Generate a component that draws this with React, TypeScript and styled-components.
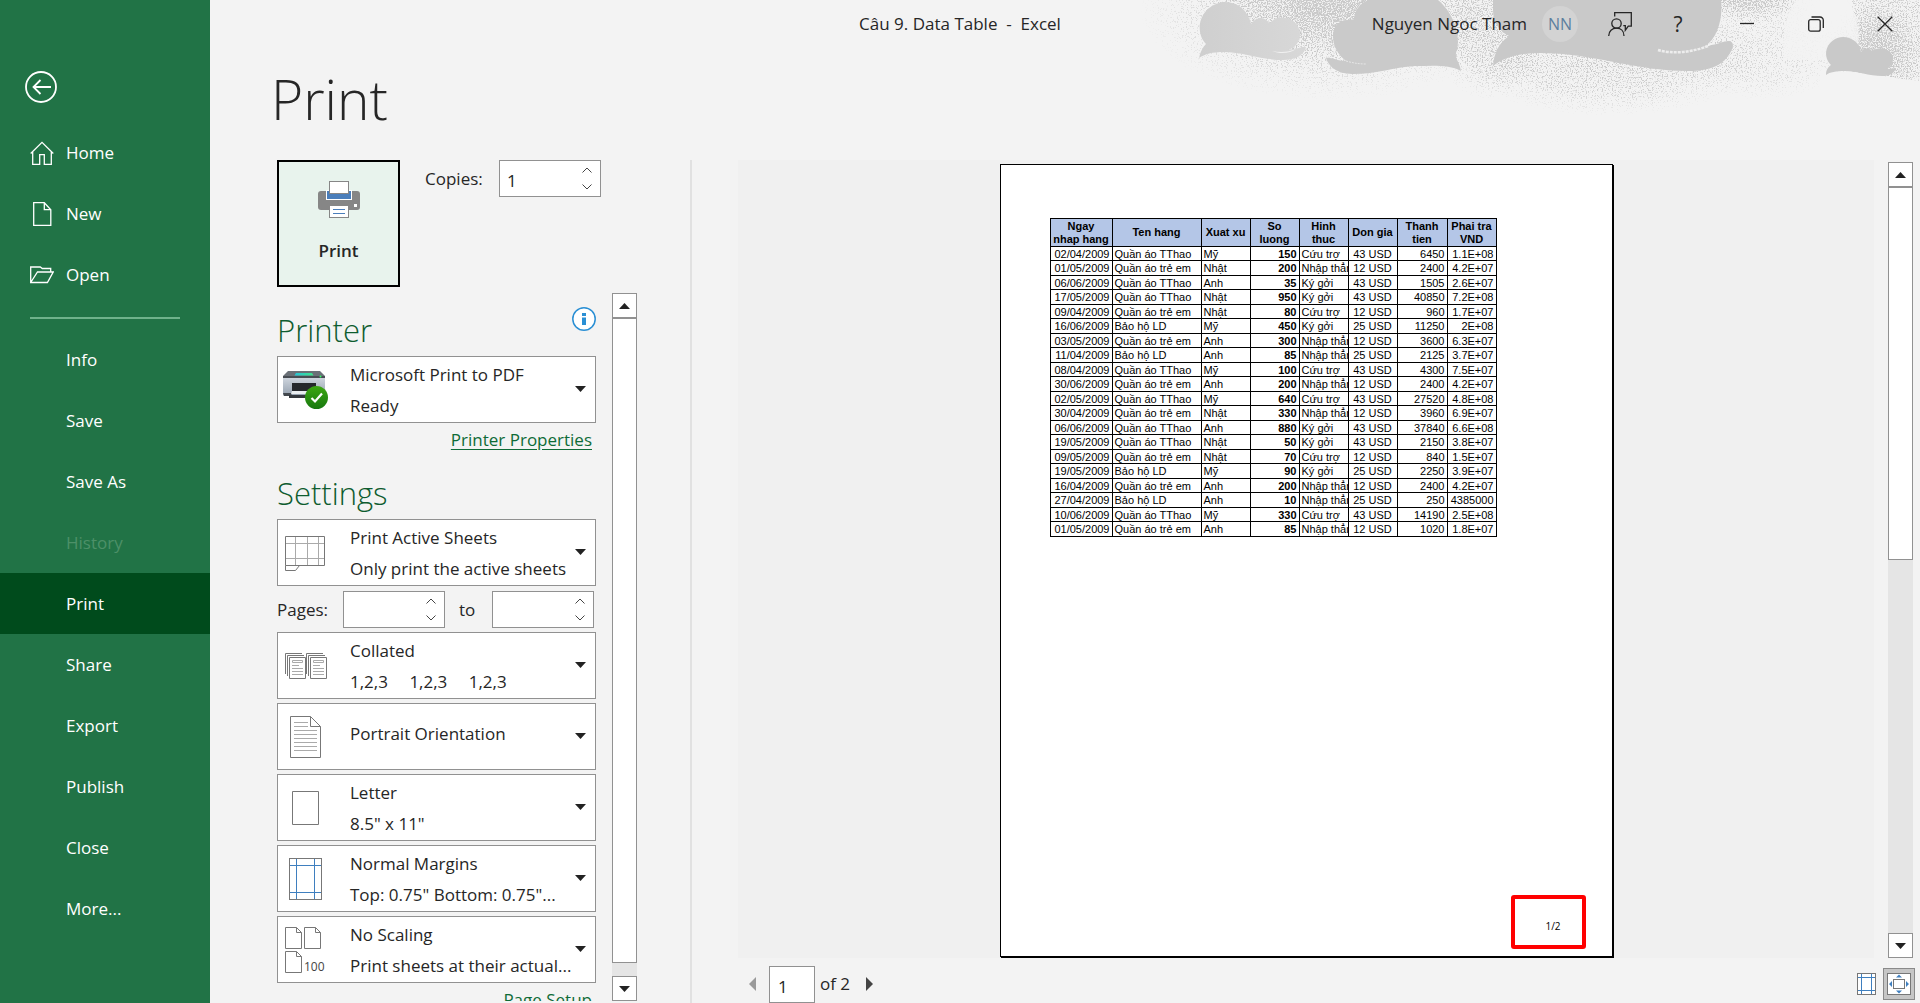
import React from "react";
import styled, { createGlobalStyle } from "styled-components";

const ui = `"Segoe UI", "Open Sans", "Noto Sans", sans-serif`;
const ink = "#262626";
const line = "#919191";

const GlobalStyle = createGlobalStyle`
  *, *::before, *::after { box-sizing: border-box; }
  body { margin: 0; background: #f3f3f3; color: ${ink}; font: 17px/24px ${ui}; }
  button, input, select { font: inherit; color: inherit; margin: 0; }
  button { background: none; border: 0; padding: 0; cursor: pointer; }
  svg { display: block; flex: none; }
`;

const Shell = styled.div`
  display: grid;
  grid-template-columns: 210px minmax(0, 1fr);
  height: 100vh;
  min-height: 640px;
  overflow: hidden;
`;

/* ---------- Sidebar ---------- */
const Sidebar = styled.nav`
  background: #217346;
  color: #fff;
  display: flex;
  flex-direction: column;
`;
const BackButton = styled.button`
  align-self: flex-start;
  margin: 71px 0 19px 25px;
`;
const NavItem = styled.button<{ $active?: boolean }>`
  display: flex;
  align-items: center;
  gap: 12px;
  flex: none;
  height: 61px;
  padding-left: 30px;
  text-align: left;
  color: #fff;
  background: ${(p) => (p.$active ? "#004b1c" : "transparent")};
  &:disabled { color: #4d9068; }
`;
const IconSlot = styled.span`
  width: 24px;
  height: 24px;
  display: grid;
  place-items: center;
`;
const NavRule = styled.hr`
  width: 150px;
  height: 2px;
  margin: 12px 0 10px 30px;
  border: 0;
  background: #6fb28b;
`;

/* ---------- Title bar ---------- */
const Main = styled.main`
  position: relative;
  display: flex;
  flex-direction: column;
  min-width: 0;
  min-height: 0;
`;
const Sky = styled.svg`
  position: absolute;
  top: 0;
  right: 0;
  pointer-events: none;
`;
const TitleBar = styled.header`
  position: relative;
  display: flex;
  align-items: center;
  justify-content: flex-end;
  height: 48px;
`;
const DocTitle = styled.div`
  position: absolute;
  left: calc(50% - 105px);
  transform: translateX(-50%);
  font-size: 17px;
  white-space: pre;
`;
const UserName = styled.span`
  margin-right: 15px;
`;
const Avatar = styled.span`
  width: 36px;
  height: 36px;
  border-radius: 50%;
  background: #d3d3d3;
  color: #5d7f9f;
  display: grid;
  place-items: center;
  font-size: 16px;
  margin-right: 16px;
`;
const BarButton = styled.button<{ $w: number }>`
  width: ${(p) => p.$w}px;
  height: 48px;
  display: grid;
  place-items: center;
  font-size: 21px;
`;

/* ---------- Body ---------- */
const PageTitle = styled.h1`
  position: relative;
  margin: 0 0 0 61px;
  height: 112px;
  font-size: 55px;
  line-height: 102px;
  font-weight: 300;
`;
const Columns = styled.div`
  flex: 1;
  min-height: 0;
  display: grid;
  grid-template-columns: 480px 2px minmax(0, 1fr);
`;
const Divider = styled.div`
  background: #e1e1e1;
`;
const Options = styled.section`
  display: flex;
  flex-direction: column;
  min-height: 0;
  padding-left: 67px;
`;
const PrintRow = styled.div`
  display: flex;
  align-items: flex-start;
`;
const PrintButton = styled.button`
  width: 123px;
  height: 127px;
  border: 2px solid #000;
  background: #e8f3ed;
  display: flex;
  flex-direction: column;
  align-items: center;
  padding-top: 19px;
  gap: 21px;
  font-weight: 600;
`;
const FieldLabel = styled.label<{ $w: number; $pad?: number }>`
  width: ${(p) => p.$w}px;
  padding-left: ${(p) => p.$pad ?? 0}px;
  line-height: 37px;
`;
const SpinBox = styled.span`
  display: flex;
  width: 102px;
  height: 37px;
  background: #fff;
  border: 1px solid ${line};
`;
const SpinInput = styled.input`
  flex: 1;
  min-width: 0;
  padding: 4px 0 0 7px;
  border: 0;
  background: none;
  outline: 0;
`;
const SpinButtons = styled.span`
  display: flex;
  flex-direction: column;
  width: 26px;
`;
const SpinButton = styled.button`
  flex: 1;
  display: grid;
  place-items: center;
`;
const ScrollArea = styled.div`
  flex: 1;
  min-height: 0;
  margin-top: 6px;
  padding-bottom: 2px;
  display: flex;
  gap: 16px;
`;
const Settings = styled.div`
  width: 319px;
  overflow: hidden;
  display: flex;
  flex-direction: column;
`;
const SectionHead = styled.div<{ $top: number }>`
  flex: none;
  display: flex;
  justify-content: space-between;
  align-items: flex-start;
  margin: ${(p) => p.$top}px 0 3px;
`;
const SectionTitle = styled.h2`
  margin: 0;
  font-size: 31px;
  line-height: 46px;
  font-weight: 300;
  color: #0e5c2f;
`;
const Card = styled.label`
  flex: none;
  display: grid;
  grid-template-columns: 54px minmax(0, 1fr);
  align-items: center;
  column-gap: 18px;
  height: 67px;
  margin-bottom: 4px;
  border: 1px solid ${line};
  background: #fff;
  position: relative;
`;
const CardIcon = styled.span`
  display: grid;
  place-items: center;
`;
const CardText = styled.span<{ $single: boolean }>`
  display: flex;
  flex-direction: column;
  line-height: 31px;
  white-space: pre;
  padding-bottom: ${(p) => (p.$single ? 6 : 0)}px;
`;
const CardSelect = styled.select`
  appearance: none;
  height: 31px;
  width: 210px;
  padding: 0;
  border: 0;
  background: none;
  outline: 0;
`;
const CardArrow = styled.span`
  position: absolute;
  right: 9px;
  top: 29px;
`;
const LinkRow = styled.div`
  flex: none;
  display: flex;
  justify-content: flex-end;
  padding: 1px 4px 0 0;
`;
const TextLink = styled.a`
  color: #0e6b37;
  text-underline-offset: 3px;
`;
const PagesRow = styled.div`
  flex: none;
  display: flex;
  margin: 1px 0 4px;
`;

/* ---------- Scrollbar ---------- */
const Scroll = styled.div<{ $top: number }>`
  width: 25px;
  margin-top: ${(p) => p.$top}px;
  display: flex;
  flex-direction: column;
  background: #e5e5e5;
`;
const ScrollButton = styled.button`
  flex: none;
  height: 25px;
  border: 1px solid ${line};
  background: #fff;
  display: grid;
  place-items: center;
`;
const Track = styled.div`
  flex: 1;
`;
const Thumb = styled.div<{ $share: number }>`
  height: ${(p) => p.$share}%;
  border: 1px solid ${line};
  background: #fff;
`;

/* ---------- Preview ---------- */
const Preview = styled.section`
  display: flex;
  flex-direction: column;
  min-width: 0;
  min-height: 0;
  padding-left: 46px;
`;
const PreviewRow = styled.div`
  flex: 1;
  min-height: 0;
  display: flex;
  gap: 14px;
  padding-right: 7px;
`;
const Stage = styled.div`
  flex: 1;
  min-width: 0;
  display: flex;
  justify-content: center;
  padding: 4px 0 1px;
  background: #f0f0f0;
`;
const Paper = styled.article`
  width: 613px;
  padding: 53px 49px 7px;
  display: flex;
  flex-direction: column;
  justify-content: space-between;
  background: #fff;
  border: 1px solid #000;
  box-shadow: 1px 1px 0 #000;
`;
const PageNumberFrame = styled.div`
  align-self: flex-end;
  width: 75px;
  height: 54px;
  margin-right: -23px;
  padding: 7px 0 0 10px;
  border: 4px solid #f00;
  border-radius: 3px;
  display: grid;
  place-items: center;
  color: #000;
  font-size: 10px;
`;
const Sheet = styled.table`
  width: 447px;
  table-layout: fixed;
  border-collapse: collapse;
  color: #000;
  font: 11px/12px "Liberation Sans", Arial, sans-serif;
  th, td { border: 1px solid #000; padding: 0 2px; white-space: nowrap; overflow: hidden; }
  th { height: 28px; padding: 0; line-height: 13px; background: #b4c6e7; white-space: pre-line; }
  tbody tr { height: 15px; }
  tbody tr:nth-child(odd) { height: 14px; }
`;
const Cell = styled.td<{ $align?: string; $bold?: boolean }>`
  text-align: ${(p) => p.$align ?? "left"};
  font-weight: ${(p) => (p.$bold ? 700 : 400)};
`;
const Footer = styled.footer`
  display: flex;
  align-items: center;
  height: 45px;
  padding: 6px 5px 0 11px;
`;
const PageInput = styled.input`
  width: 46px;
  height: 37px;
  margin: 1px 5px 0 13px;
  padding: 4px 0 0 8px;
  border: 1px solid ${line};
  background: #fff;
`;
const PageCount = styled.span`
  margin-right: 16px;
`;
const Spacer = styled.span`
  flex: 1;
`;
const ZoomButton = styled.button`
  width: 32px;
  height: 32px;
  margin-left: 7px;
  border: 1px solid #8a8a8a;
  background: #c6c6c6;
  display: grid;
  place-items: center;
`;

/* ---------- Icons ---------- */
const BackIcon = () => (
  <svg width="32" height="32" fill="none" stroke="#fff" strokeWidth="1.8">
    <circle cx="16" cy="16" r="15" />
    <path d="M26 16H8.5M15.500 9L8.500 16l7 7" />
  </svg>
);
const HomeIcon = () => (
  <svg width="24" height="24" fill="none" stroke="#fff" strokeWidth="1.3">
    <path d="M.7 12.500L12 1.300l11.300 11.200M2.700 11v12.300h7V13.700h4.600v9.600h7V11" />
  </svg>
);
const NewIcon = () => (
  <svg width="24" height="24" fill="none" stroke="#fff" strokeWidth="1.3">
    <path d="M3.700.700h10.600l6.500 7v15.600H3.700zM14.300.700v7h6.500" />
  </svg>
);
const OpenIcon = () => (
  <svg width="24" height="24" fill="none" stroke="#fff" strokeWidth="1.3">
    <path d="M.700 19.500V4h9.600l2 1.500h8.400v3.500M.700 19.500L7.500 9h15.700l-5.800 10.500z" />
  </svg>
);
const FeedbackIcon = () => (
  <svg width="24" height="24" fill="none" stroke={ink} strokeWidth="1.3">
    <path d="M6.700 4.500V.700h16.600v13.500h-3l-3 4v-4.500h-2" />
    <circle cx="8.500" cy="11.500" r="4.700" />
    <path d="M.700 24c0-5 3.500-7.800 7.800-7.800s7.500 2.800 7.500 7.800" />
  </svg>
);
const MinIcon = () => (
  <svg width="16" height="16" stroke={ink} strokeWidth="1.300"><path d="M1 7.500h14" /></svg>
);
const RestoreIcon = () => (
  <svg width="16" height="16" fill="none" stroke={ink} strokeWidth="1.300">
    <rect x=".700" y="3.700" width="11.500" height="11.500" rx="2" />
    <path d="M3.500 1h8.500a3.300 3.300 0 0 1 3.300 3.300V12" />
  </svg>
);
const CloseIcon = () => (
  <svg width="16" height="16" stroke={ink} strokeWidth="1.300"><path d="M.700.700l14.600 14.600M15.300.700L.700 15.300" /></svg>
);
const PrinterIcon = () => (
  <svg width="42" height="37">
    <rect y="10" width="42" height="19" rx="3" fill="#868686" />
    <rect x="8" y="9" width="26" height="10" fill="#fff" />
    <rect x="9" y="10" width="24" height="8" fill="#4a7ebb" />
    <rect x="11.500" y=".500" width="19" height="12" fill="#fff" stroke="#868686" />
    <rect x="11.500" y="24.500" width="19" height="12" fill="#fff" stroke="#868686" />
    <path d="M15 28.500h12M15 32.500h12" stroke="#4a7ebb" />
    <rect x="36" y="23" width="3" height="3" fill="#fff" />
  </svg>
);
const DeviceIcon = () => (
  <svg width="45" height="39">
    <defs>
      <linearGradient id="body" x1="0" y1="0" x2="0" y2="1"><stop stopColor="#d4dae2" /><stop offset="1" stopColor="#939fad" /></linearGradient>
      <linearGradient id="glass"><stop stopColor="#27c3d8" /><stop offset="1" stopColor="#3de58a" /></linearGradient>
      <linearGradient id="tick" x1="0" y1="0" x2="0" y2="1"><stop stopColor="#3da712" /><stop offset="1" stopColor="#17780f" /></linearGradient>
    </defs>
    <path d="M0 6h42v18q0 2-2 2H2q-2 0-2-2z" fill="url(#body)" />
    <path d="M5 1h32l5 5v2H0V6z" fill="#6a7077" />
    <path d="M0 6h42v2H0z" fill="#484d53" />
    <path d="M13 3h16l1.500 2.500h-19z" fill="url(#glass)" />
    <path d="M9 13h24v8H9z" fill="#25282c" />
    <path d="M0 23h10l-3 3H1z" fill="#43484e" />
    <path d="M9 21h24v3H8z" fill="#e9edf0" />
    <path d="M6 25h26v3H6z" fill="#34383d" />
    <circle cx="37.500" cy="6.500" r="1" fill="#3f6" />
    <circle cx="33.500" cy="27.500" r="11.500" fill="url(#tick)" />
    <path d="M28.500 28l3.500 3.500 7-8" fill="none" stroke="#fff" strokeWidth="2.200" />
  </svg>
);
const SheetIcon = () => (
  <svg width="42" height="36" fill="none" stroke="#777">
    <path d="M1 8.500h40M1 23.500h40M11.500 1v29M23.500 1v29M34.500 1v29" stroke="#aaa" />
    <path d="M1.500 1.500h39v29h-39zM1.500 30.500v5h10l4-5" />
  </svg>
);
const CollatedIcon = () => (
  <svg width="43" height="27" fill="none" stroke="#777">
    {[0, 21].map((x) => (
      <g key={x} transform={`translate(${x})`}>
        <path d="M1.500 22V1.500H18M3.500 24V3.500H20M5.500 5.500h16v21h-16z" />
        <path d="M8.500 8.500h10v2h-10zM8 13.500h7M8 16.500h11M8 19.500h11M8 22.500h11" stroke="#aaa" />
      </g>
    ))}
  </svg>
);
const PortraitIcon = () => (
  <svg width="31" height="42" fill="none" stroke="#777">
    <path d="M.500.500h20l10 10v31H.500zM20.500.500v10h10" />
    <path d="M4 6.500h14M4 10.500h14M4 14.500h23M4 18.500h23M4 22.500h23M4 26.500h23M4 30.500h23M4 34.500h23" stroke="#aaa" />
  </svg>
);
const LetterIcon = () => (
  <svg width="27" height="34" fill="none" stroke="#777"><path d="M.500.500h26v33H.500z" /></svg>
);
const MarginsIcon = ({ w, h, m }: { w: number; h: number; m: number }) => (
  <svg width={w} height={h} fill="none" stroke="#777">
    <rect x=".500" y=".500" width={w - 1} height={h - 1} fill="#fff" />
    <path
      stroke="#3f7fbf"
      d={`M${m + 0.5} 1V${h - 1}M${w - m - 0.5} 1V${h - 1}M1 ${m + 0.5}H${w - 1}M1 ${h - m - 0.5}H${w - 1}`}
    />
  </svg>
);
const ScalingIcon = () => (
  <svg width="40" height="46" fill="none" stroke="#777">
    {["translate(0)", "translate(19)", "translate(0 24)"].map((t) => (
      <path key={t} transform={t} d="M.500.500h11l5 5v16H.500zM11.500.500v5h5" />
    ))}
    <text x="19" y="44" fontSize="12" fill="#444" stroke="none">100</text>
  </svg>
);
const InfoIcon = () => (
  <svg width="24" height="24">
    <circle cx="12" cy="12" r="11.200" fill="#fff" stroke="#2a8fd4" strokeWidth="1.500" />
    <path d="M10 6h4v3h-4zM10 10.500h4V18h-4z" fill="#2a8fd4" />
  </svg>
);
const Chevron = ({ up }: { up?: boolean }) => (
  <svg width="10" height="6" fill="none" stroke="#444">
    <path d={up ? "M.500 5.500l4.500-4.500 4.500 4.500" : "M.500.500l4.500 4.500 4.500-4.500"} />
  </svg>
);
const Caret = ({ up }: { up?: boolean }) => (
  <svg width="11" height="6"><path d={up ? "M0 6h11L5.500 0z" : "M0 0h11L5.500 6z"} fill="#222" /></svg>
);
const SideCaret = ({ left }: { left?: boolean }) => (
  <svg width="7" height="14"><path d={left ? "M7 0v14L0 7z" : "M0 0v14l7-7z"} fill={left ? "#9a9a9a" : "#444"} /></svg>
);
const FitIcon = () => (
  <svg width="24" height="22">
    <rect x=".500" y=".500" width="23" height="21" fill="#fff" stroke="#777" />
    <rect x="6.500" y="6.500" width="11" height="9" fill="none" stroke="#777" />
    <path d="M12 1.500l3 3H9zM12 20.500l3-3H9zM2 11l3-3v6zM22 11l-3-3v6z" fill="#3f7fbf" />
  </svg>
);

const SkyArt = () => (
  <Sky width="780" height="120" aria-hidden="true">
    <defs>
      <filter id="grain" x="0" y="0" width="100%" height="100%" colorInterpolationFilters="sRGB">
        <feTurbulence type="fractalNoise" baseFrequency="0.8" numOctaves="2" seed="4" />
        <feColorMatrix values="0 0 0 0 0  0 0 0 0 0  0 0 0 0 0  3 0 0 0 -1" result="n" />
        <feComposite in="SourceGraphic" in2="n" operator="arithmetic" k2="1" k3="1" k4="-1" />
        <feComponentTransfer result="m"><feFuncA type="linear" slope="2" /></feComponentTransfer>
        <feFlood floodColor="#c9c9c9" />
        <feComposite operator="in" in2="m" />
      </filter>
      <radialGradient id="puff"><stop offset=".2" stopOpacity=".8" /><stop offset="1" stopOpacity="0" /></radialGradient>
      <radialGradient id="haze"><stop stopOpacity=".55" /><stop offset=".6" stopOpacity=".4" /><stop offset="1" stopOpacity="0" /></radialGradient>
      <linearGradient id="fade" x1="0" y1="0" x2="1" y2="0"><stop stopColor="#cfcfcf" /><stop offset="1" stopColor="#d8d8d8" /></linearGradient>
    </defs>
    <g filter="url(#grain)">
      <rect width="780" height="120" fill="none" />
      <ellipse cx="190" cy="10" rx="190" ry="90" fill="url(#haze)" />
      <ellipse cx="190" cy="0" rx="120" ry="62" fill="url(#puff)" />
      <ellipse cx="350" cy="30" rx="60" ry="70" fill="url(#haze)" />
      <ellipse cx="470" cy="60" rx="150" ry="56" fill="url(#haze)" />
      <ellipse cx="610" cy="0" rx="70" ry="24" fill="url(#puff)" />
      <ellipse cx="620" cy="50" rx="90" ry="50" fill="url(#haze)" opacity=".7" />
      <path d="M712 0h68v82l-44-5-20-15z" fillOpacity=".45" />
      <ellipse cx="735" cy="50" rx="50" ry="50" fill="url(#puff)" />
    </g>
    <path d="M644 60C640 30 650 0 663-6h38c15 12 22 36 15 66z" fill="#f2f2f2" fillOpacity=".85" />
    <path d="M680 73C710 68 745 78 780 81v39H680z" fill="#f3f3f3" />
    <path d="M59 58c1-6 4-11 7-14-12-12-7-38 17-42 14-1 25 8 28 22 5-8 15-8 18 0 10-13 31-5 31 10 0 8-5 14-12 16 8-1 12-3 18-3-2 9-12 13-23 13-22 0-40-8-59-8-12 0-19 2-25 6z" fill="url(#fade)" />
    <path d="M132 51c9 2 17 1 24-2-6 5-17 5-24 2z" fill="#f0f0f0" />
    <path d="M186 58c5-1 11 3 20 3-8-6-13-15-13-25 0-10 6-16 15-16h6c0-8 5-16 14-20h70c16 13 24 38 18 53-1 6 4 10 5 18-12-7-30-5-47-5-20 1-36 8-62 8-16 0-24-9-26-16z" fill="#cacaca" />
    <path d="M206 61c7 2 13 3 20 3" fill="none" stroke="#e6e6e6" strokeDasharray="2 1" />
    <path d="M353 0h228c2 18-3 38-17 47 10-2 18-5 24-6 5 0 6 4 4 8-6 15-20 22-44 22-54 0-94-18-148-18-18 0-35 3-47 13 1-14 7-24 16-30-10-5-16-14-16-26z" fill="#c9c9c9" />
    <path d="M518 50c14 4 32 3 50-4" fill="none" stroke="#ededed" strokeWidth="2.500" strokeDasharray="3 1" />
    <path d="M686 75c0-5 2-8 5-10-10-10-4-27 12-28 10 0 17 7 18 15 3-5 8-4 11-1 8-6 21-2 21 8 0 5-3 8-6 10 4 0 6-1 9-1-2 6-7 8-13 8-15 0-25-5-38-5-9 0-15 1-19 4z" fill="#c9c9c9" />
  </Sky>
);

/* ---------- Data ---------- */
const headers = ["Ngay\nnhap hang", "Ten hang", "Xuat xu", "So\nluong", "Hinh\nthuc", "Don gia", "Thanh\ntien", "Phai tra\nVND"];
const widths = [62, 89, 49, 49, 49, 49, 50, 49];
const A = "Quần áo TThao";
const B = "Quần áo trẻ em";
const C = "Bảo hộ LD";
const U = "Cứu trợ";
const N = "Nhập thẳng";
const K = "Ký gởi";
const rows: string[][] = [
  ["02/04/2009", A, "Mỹ", "150", U, "43 USD", "6450", "1.1E+08"],
  ["01/05/2009", B, "Nhật", "200", N, "12 USD", "2400", "4.2E+07"],
  ["06/06/2009", A, "Anh", "35", K, "43 USD", "1505", "2.6E+07"],
  ["17/05/2009", A, "Nhật", "950", K, "43 USD", "40850", "7.2E+08"],
  ["09/04/2009", B, "Nhật", "80", U, "12 USD", "960", "1.7E+07"],
  ["16/06/2009", C, "Mỹ", "450", K, "25 USD", "11250", "2E+08"],
  ["03/05/2009", B, "Anh", "300", N, "12 USD", "3600", "6.3E+07"],
  ["11/04/2009", C, "Anh", "85", N, "25 USD", "2125", "3.7E+07"],
  ["08/04/2009", A, "Mỹ", "100", U, "43 USD", "4300", "7.5E+07"],
  ["30/06/2009", B, "Anh", "200", N, "12 USD", "2400", "4.2E+07"],
  ["02/05/2009", A, "Mỹ", "640", U, "43 USD", "27520", "4.8E+08"],
  ["30/04/2009", B, "Nhật", "330", N, "12 USD", "3960", "6.9E+07"],
  ["06/06/2009", A, "Anh", "880", K, "43 USD", "37840", "6.6E+08"],
  ["19/05/2009", A, "Nhật", "50", K, "43 USD", "2150", "3.8E+07"],
  ["09/05/2009", B, "Nhật", "70", U, "12 USD", "840", "1.5E+07"],
  ["19/05/2009", C, "Mỹ", "90", K, "25 USD", "2250", "3.9E+07"],
  ["16/04/2009", B, "Anh", "200", N, "12 USD", "2400", "4.2E+07"],
  ["27/04/2009", C, "Anh", "10", N, "25 USD", "250", "4385000"],
  ["10/06/2009", A, "Mỹ", "330", U, "43 USD", "14190", "2.5E+08"],
  ["01/05/2009", B, "Anh", "85", N, "12 USD", "1020", "1.8E+07"],
];
const aligns = ["right", "left", "left", "right", "left", "center", "right", "right"];

const topNav = [
  { label: "Home", icon: <HomeIcon /> },
  { label: "New", icon: <NewIcon /> },
  { label: "Open", icon: <OpenIcon /> },
];
const restNav = ["Info", "Save", "Save As", "History", "Print", "Share", "Export", "Publish", "Close", "More..."];

/* ---------- Composite parts ---------- */
function Spinner({ id, value }: { id: string; value: string }) {
  return (
    <SpinBox>
      <SpinInput id={id} inputMode="numeric" defaultValue={value} />
      <SpinButtons>
        <SpinButton aria-label="Increase"><Chevron up /></SpinButton>
        <SpinButton aria-label="Decrease"><Chevron /></SpinButton>
      </SpinButtons>
    </SpinBox>
  );
}

function OptionCard({ icon, title, detail }: { icon: React.ReactNode; title: string; detail?: string }) {
  return (
    <Card>
      <CardIcon>{icon}</CardIcon>
      <CardText $single={!detail}>
        <CardSelect defaultValue={title}><option>{title}</option></CardSelect>
        {detail && <span>{detail}</span>}
      </CardText>
      <CardArrow><Caret /></CardArrow>
    </Card>
  );
}

function ScrollBar({ share, top = 0 }: { share: number; top?: number }) {
  return (
    <Scroll $top={top}>
      <ScrollButton aria-label="Scroll up"><Caret up /></ScrollButton>
      <Track><Thumb $share={share} /></Track>
      <ScrollButton aria-label="Scroll down"><Caret /></ScrollButton>
    </Scroll>
  );
}

export default function App() {
  return (
    <Shell>
      <GlobalStyle />
      <Sidebar>
        <BackButton aria-label="Back"><BackIcon /></BackButton>
        {topNav.map((n) => (
          <NavItem key={n.label}><IconSlot>{n.icon}</IconSlot>{n.label}</NavItem>
        ))}
        <NavRule />
        {restNav.map((label) => (
          <NavItem key={label} $active={label === "Print"} disabled={label === "History"}>
            <IconSlot />{label}
          </NavItem>
        ))}
      </Sidebar>
      <Main>
        <SkyArt />
        <TitleBar>
          <DocTitle>Câu 9. Data Table  -  Excel</DocTitle>
          <UserName>Nguyen Ngoc Tham</UserName>
          <Avatar>NN</Avatar>
          <BarButton $w={52} aria-label="Feedback"><FeedbackIcon /></BarButton>
          <BarButton $w={64}>?</BarButton>
          <BarButton $w={73} aria-label="Minimize"><MinIcon /></BarButton>
          <BarButton $w={66} aria-label="Restore"><RestoreIcon /></BarButton>
          <BarButton $w={71} aria-label="Close window"><CloseIcon /></BarButton>
        </TitleBar>
        <PageTitle>Print</PageTitle>
        <Columns>
          <Options>
            <PrintRow>
              <PrintButton><PrinterIcon />Print</PrintButton>
              <FieldLabel htmlFor="copies" $w={99} $pad={25}>Copies:</FieldLabel>
              <Spinner id="copies" value="1" />
            </PrintRow>
            <ScrollArea>
              <Settings>
                <SectionHead $top={14}>
                  <SectionTitle>Printer</SectionTitle>
                  <InfoIcon />
                </SectionHead>
                <OptionCard icon={<DeviceIcon />} title="Microsoft Print to PDF" detail="Ready" />
                <LinkRow><TextLink href="#properties">Printer Properties</TextLink></LinkRow>
                <SectionHead $top={18}><SectionTitle>Settings</SectionTitle></SectionHead>
                <OptionCard icon={<SheetIcon />} title="Print Active Sheets" detail="Only print the active sheets" />
                <PagesRow>
                  <FieldLabel htmlFor="from" $w={66}>Pages:</FieldLabel>
                  <Spinner id="from" value="" />
                  <FieldLabel htmlFor="to" $w={47} $pad={14}>to</FieldLabel>
                  <Spinner id="to" value="" />
                </PagesRow>
                <OptionCard icon={<CollatedIcon />} title="Collated" detail={"1,2,3\u2003 1,2,3\u2003 1,2,3"} />
                <OptionCard icon={<PortraitIcon />} title="Portrait Orientation" />
                <OptionCard icon={<LetterIcon />} title="Letter" detail={'8.5" x 11"'} />
                <OptionCard icon={<MarginsIcon w={33} h={42} m={7} />} title="Normal Margins" detail={'Top: 0.75" Bottom: 0.75"...'} />
                <OptionCard icon={<ScalingIcon />} title="No Scaling" detail="Print sheets at their actual..." />
                <LinkRow><TextLink href="#setup">Page Setup</TextLink></LinkRow>
              </Settings>
              <ScrollBar share={98} />
            </ScrollArea>
          </Options>
          <Divider />
          <Preview>
            <PreviewRow>
              <Stage>
                <Paper>
                  <Sheet>
                    <colgroup>{widths.map((w, i) => <col key={i} width={w} />)}</colgroup>
                    <thead><tr>{headers.map((h) => <th key={h}>{h}</th>)}</tr></thead>
                    <tbody>
                      {rows.map((r, i) => (
                        <tr key={i}>
                          {r.map((c, j) => <Cell key={j} $align={aligns[j]} $bold={j === 3}>{c}</Cell>)}
                        </tr>
                      ))}
                    </tbody>
                  </Sheet>
                  <PageNumberFrame>1/2</PageNumberFrame>
                </Paper>
              </Stage>
              <ScrollBar share={50} top={2} />
            </PreviewRow>
            <Footer>
              <button aria-label="Previous page"><SideCaret left /></button>
              <PageInput id="page" aria-label="Page" defaultValue="1" />
              <PageCount>of 2</PageCount>
              <button aria-label="Next page"><SideCaret /></button>
              <Spacer />
              <button aria-label="Show margins"><MarginsIcon w={19} h={22} m={4} /></button>
              <ZoomButton aria-label="Zoom to page"><FitIcon /></ZoomButton>
            </Footer>
          </Preview>
        </Columns>
      </Main>
    </Shell>
  );
}
